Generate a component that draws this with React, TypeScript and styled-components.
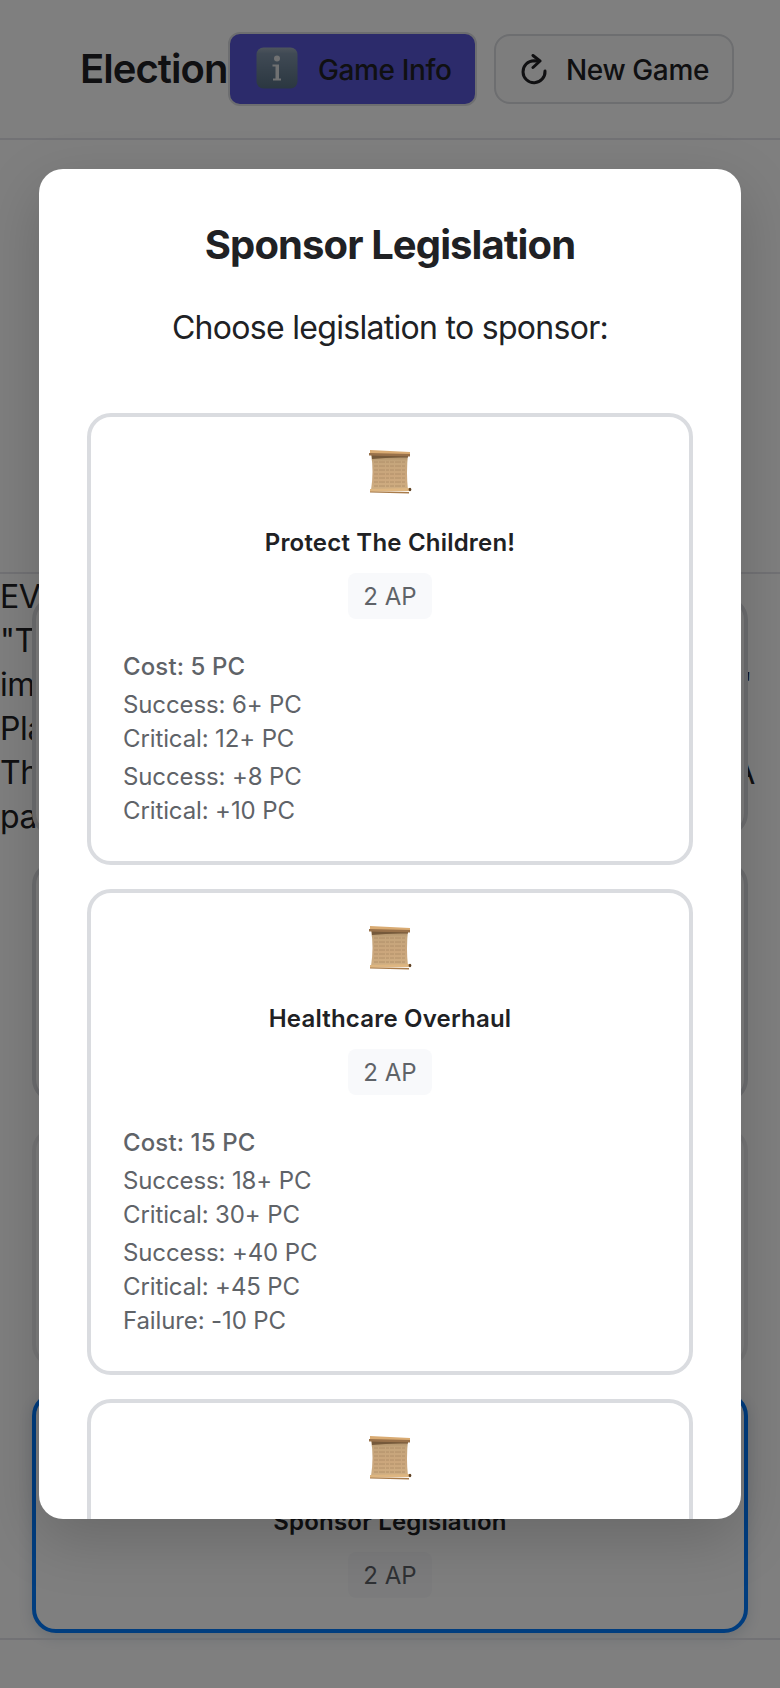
import React from "react";
import styled, { createGlobalStyle } from "styled-components";

const Global = createGlobalStyle`
  * { box-sizing: border-box; }
  html, body { margin: 0; padding: 0; background: #fff; }
  body { width: 780px; height: 1688px; overflow: hidden; font-family: Inter, "Liberation Sans", sans-serif; color: #202124; }
`;

const Screen = styled.div`
  position: relative;
  display: flex;
  flex-direction: column;
  width: 780px;
  height: 1688px;
  overflow: hidden;
  background: #fff;
`;

const Header = styled.header`
  display: flex;
  align-items: center;
  flex: none;
  height: 140px;
  padding: 0 46px 0 80px;
  border-bottom: 2px solid #e5e5ea;
`;

const AppTitle = styled.h1`
  width: 148px;
  margin: 0;
  font-size: 40px;
  font-weight: 600;
  line-height: 1.2;
  letter-spacing: -0.95px;
  white-space: nowrap;
`;

const HeaderButton = styled.button<{ $primary?: boolean }>`
  display: flex;
  align-items: center;
  gap: ${p => (p.$primary ? 20 : 18)}px;
  width: ${p => (p.$primary ? 249 : 240)}px;
  height: ${p => (p.$primary ? 74 : 70)}px;
  margin-left: ${p => (p.$primary ? 0 : 17)}px;
  padding: 2px 0 0 ${p => (p.$primary ? 26 : 24)}px;
  border: 2px solid #dadce0;
  border-radius: ${p => (p.$primary ? 12 : 16)}px;
  background: ${p => (p.$primary ? "#5856d6" : "#fafafa")};
  color: inherit;
  font: 500 28px Inter, sans-serif;
  letter-spacing: -0.38px;
  white-space: nowrap;
`;

const InfoGlyph = styled.svg`
  flex: none;
  margin-bottom: 5px;
`;

const Main = styled.main`
  display: grid;
  flex: none;
  height: 1498px;
  grid-template-rows: 434px 1fr;
`;

const Scene = styled.section`
  border-bottom: 2px solid #e5e5ea;
`;

const Stage = styled.section`
  display: grid;
  grid-template-columns: 100%;
`;

const EventText = styled.div`
  grid-area: 1 / 1;
  padding-top: 1px;
  font-size: 32px;
  line-height: 44px;
  letter-spacing: -0.4px;
`;

const EventLine = styled.div<{ $inset?: number }>`
  display: flex;
  justify-content: space-between;
  padding-right: ${p => p.$inset ?? 0}px;
`;

const ActionList = styled.div`
  grid-area: 1 / 1;
  display: flex;
  flex-direction: column;
  gap: 24px;
  padding: 22px 32px 0;
`;

const Card = styled.article<{ $tone?: "selected" | "disabled"; $height?: number }>`
  display: flex;
  flex-direction: column;
  align-items: center;
  flex: none;
  height: ${p => p.$height ?? 241.25}px;
  padding: 28px 32px;
  border: 4px solid ${p => (p.$tone === "selected" ? "#007aff" : "#dadce0")};
  border-radius: 24px;
  background: #fff;
  opacity: ${p => (p.$tone === "disabled" ? 0.5 : 1)};
  box-shadow: ${p => (p.$tone === "selected" ? "0 4px 16px rgba(0, 50, 100, 0.16)" : "none")};
`;

const CardIcon = styled.div`
  display: flex;
  height: 54px;
  padding-top: 4px;
`;

const CardName = styled.h3`
  margin: 26px 0 13px;
  font-size: 24px;
  font-weight: 600;
  line-height: 35px;
  letter-spacing: 0.2px;
  white-space: nowrap;
`;

const Cost = styled.span`
  display: flex;
  align-items: center;
  justify-content: center;
  flex: none;
  width: 84px;
  height: 46px;
  padding-top: 1px;
  border-radius: 8px;
  background: #f8f9fb;
  color: #5f6368;
  font-size: 24px;
`;

const Details = styled.div`
  display: flex;
  flex-direction: column;
  gap: 4px;
  width: 100%;
  margin-top: 31px;
  color: #5f6368;
  font-size: 24px;
  line-height: 34px;
`;

const DetailGroup = styled.div<{ $strong?: boolean }>`
  font-weight: ${p => (p.$strong ? 500 : 400)};
  letter-spacing: ${p => (p.$strong ? 0.12 : -0.12)}px;
`;

const Footer = styled.footer`
  flex: 1;
  border-top: 2px solid #e5e5ea;
`;

const Overlay = styled.div`
  position: absolute;
  inset: 0;
  display: flex;
  align-items: center;
  justify-content: center;
  background: rgba(0, 0, 0, 0.5);
`;

const Dialog = styled.div`
  width: 702px;
  height: 1350px;
  padding: 48px;
  overflow: hidden;
  border-radius: 24px;
  background: #fff;
  box-shadow: 0 20px 60px rgba(0, 0, 0, 0.18);
`;

const DialogTitle = styled.h2`
  margin: 0;
  font-size: 40px;
  font-weight: 700;
  line-height: 56px;
  letter-spacing: -0.9px;
  text-align: center;
`;

const DialogText = styled.p`
  margin: 33px 0 63px;
  font-size: 32px;
  line-height: 44px;
  letter-spacing: -0.7px;
  text-align: center;
`;

const CardList = styled.div`
  display: flex;
  flex-direction: column;
  gap: 24px;
`;

const Scroll = () => (
  <svg width="44" height="46" viewBox="0 0 44 46">
    <defs>
      <linearGradient id="paper" x1="0" y1="0" x2="0" y2="1">
        <stop offset="0" stopColor="#a08460" />
        <stop offset="0.2" stopColor="#c5a67c" />
        <stop offset="0.6" stopColor="#cba67c" />
        <stop offset="1" stopColor="#cfae82" />
      </linearGradient>
    </defs>
    <path d="M3 5H40Q38 24 40 41H3Q6 22 3 5Z" fill="url(#paper)" />
    <path d="M4 6L40 7V8.500Q20 8 4 10Z" fill="#75593a" />
    <path d="M2 1L42 3V6L2 5Z" fill="#d9ab73" />
    <path d="M1 4H2L42 5V7.500L2 6.500H1Z" fill="#98714a" />
    <g fill="none" stroke="#ab8a64" strokeWidth="0.800" strokeDasharray="4 1 6 1 3 1">
      <path d="M6 13H37M6 17H37M6 21H37M6 25H37M6 29H37M6 33H37M6 37H37" />
    </g>
    <path d="M2 40L42 39V42L2 43Z" fill="#deb681" />
    <path d="M2 42.500L41 43V44.500L2 43.500Z" fill="#a87b4b" />
    <ellipse cx="42" cy="40.500" rx="1.300" ry="1.800" fill="#604325" />
  </svg>
);

const InfoIcon = () => (
  <InfoGlyph width="42" height="42" viewBox="0 0 42 42">
    <defs>
      <linearGradient id="info" x1="0" y1="0" x2="0" y2="1">
        <stop offset="0" stopColor="#9dabba" />
        <stop offset="0.15" stopColor="#8094a9" />
        <stop offset="1" stopColor="#566f82" />
      </linearGradient>
    </defs>
    <rect x="0.500" y="0.500" width="41" height="41" rx="7" fill="url(#info)" />
    <circle cx="21" cy="11.500" r="3" fill="#e0e2e4" />
    <path d="M16.500 17.500H23V31.500H25V33.500H17V31.500H19.500V19.500H16.500Z" fill="#e0e2e4" />
  </InfoGlyph>
);

const RestartIcon = () => (
  <svg width="28" height="32" viewBox="0 0 28 32" fill="none" stroke="currentColor" strokeWidth="3" strokeLinecap="round" strokeLinejoin="round">
    <path d="M19 7L14 6.700A11 11 0 1 0 25 17" />
    <path d="M13 1.500L20 7L13 13.500" />
  </svg>
);

type Bill = { name: string; height: number; groups: string[][] };

const bills: Bill[] = [
  { name: "Protect The Children!", height: 452, groups: [["Cost: 5 PC"], ["Success: 6+ PC", "Critical: 12+ PC"], ["Success: +8 PC", "Critical: +10 PC"]] },
  { name: "Healthcare Overhaul", height: 486, groups: [["Cost: 15 PC"], ["Success: 18+ PC", "Critical: 30+ PC"], ["Success: +40 PC", "Critical: +45 PC", "Failure: -10 PC"]] },
  { name: "", height: 452, groups: [] },
];

const BillCard = ({ bill }: { bill: Bill }) => (
  <Card $height={bill.height}>
    <CardIcon><Scroll /></CardIcon>
    {bill.name && (
      <>
        <CardName>{bill.name}</CardName>
        <Cost>2 AP</Cost>
        <Details>
          {bill.groups.map((lines, i) => (
            <DetailGroup key={i} $strong={i === 0}>
              {lines.map(line => <div key={line}>{line}</div>)}
            </DetailGroup>
          ))}
        </Details>
      </>
    )}
  </Card>
);

export default function App() {
  return (
    <Screen>
      <Global />
      <Header>
        <AppTitle>Election</AppTitle>
        <HeaderButton $primary><InfoIcon />Game Info</HeaderButton>
        <HeaderButton><RestartIcon />New Game</HeaderButton>
      </Header>
      <Main>
        <Scene />
        <Stage>
          <EventText>
            <EventLine>EV</EventLine>
            <EventLine>"T</EventLine>
            <EventLine $inset={28}><span>im</span><span>"</span></EventLine>
            <EventLine>Pla</EventLine>
            <EventLine $inset={25}><span>Th</span><span>A</span></EventLine>
            <EventLine>pa</EventLine>
          </EventText>
          <ActionList>
            <Card />
            <Card />
            <Card $tone="disabled" />
            <Card $tone="selected">
              <CardIcon />
              <CardName>Sponsor Legislation</CardName>
              <Cost>2 AP</Cost>
            </Card>
          </ActionList>
        </Stage>
      </Main>
      <Footer />
      <Overlay>
        <Dialog>
          <DialogTitle>Sponsor Legislation</DialogTitle>
          <DialogText>Choose legislation to sponsor:</DialogText>
          <CardList>
            {bills.map((bill, i) => <BillCard key={i} bill={bill} />)}
          </CardList>
        </Dialog>
      </Overlay>
    </Screen>
  );
}
